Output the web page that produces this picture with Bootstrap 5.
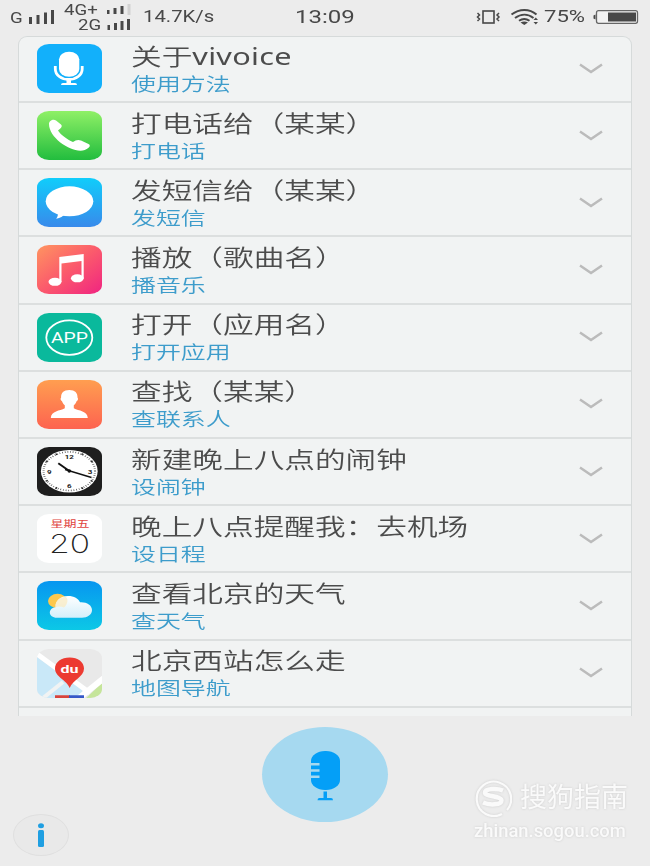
<!DOCTYPE html>
<html lang="zh-CN">
<head>
    <meta charset="UTF-8">
    <meta name="viewport" content="width=device-width, initial-scale=1.0">
    <title>vivoice</title>
    <link href="https://cdn.jsdelivr.net/npm/bootstrap@5.3.0/dist/css/bootstrap.min.css" rel="stylesheet">
    <style>
        body {
            background: #ececec;
            font-family: Roboto, "Noto Sans CJK SC", sans-serif;
            color: #505050;
            height: 866px;
            overflow: hidden;
        }
        svg { display: block; flex: none; }
        /* all lettering is wide: stretched sideways from its left edge */
        .wide {
            display: inline-block;
            white-space: nowrap;
            transform: scaleX(1.333);
            transform-origin: 0 50%;
        }
        .status { height: 34px; line-height: 1; color: #484848; margin-bottom: 2px; }
        .st-g { width: 18px; font-size: 14px; padding-top: 2px; }
        .st-net { width: 41px; font-size: 14px; }
        .st-speed { width: 152px; font-size: 16px; }
        .st-speed .wide { transform: scaleX(1.27); }
        .st-time { width: 181px; font-size: 18px; }
        .st-bat { width: 48px; font-size: 16.6px; }

        .cmd-list {
            height: 680px;
            margin: 0 18px;
            background: #f1f3f3;
            border: 1px solid #d6dada;
            border-bottom: 0;
            border-radius: 9px 9px 0 0;
            overflow: hidden;
        }
        .cmd-item {
            height: 67.2px;
            padding: 0 26px 0 18px;
            border-bottom: 2px solid #dcdfdf;
        }
        .cmd-item:first-child { height: 66px; padding-bottom: 1px; }
        .cmd-icon { width: 65px; height: 49px; margin-right: 28.500px; }
        .cmd-title { font-family: "Open Sans", "Noto Sans CJK SC", sans-serif; font-size: 23px; line-height: 28px; height: 28px; font-weight: 350; color: #4c4c4c; padding-top: 1px; }
        .cmd-title .latin { font-family: "Noto Sans", sans-serif; font-weight: 400; letter-spacing: .2px; }
        .cmd-sub { font-size: 18.7px; line-height: 28px; height: 28px; font-weight: 350; color: #3d9ccb; padding-top: 2px; }

        .footer-bar { height: 150px; }
        .btn-info-round {
            width: 56px; height: 42px;
            margin: 98px 0 0 13px;
            border: 1px solid #dfdfdf;
            border-radius: 50%;
            background: #e9e9e9;
        }
        .btn-mic {
            width: 126px; height: 95px;
            margin: 10.500px 0 0 193px;
            border-radius: 50%;
            background: #a6d9f0;
        }
        .logo-mark { margin: 63px 0 0 86px; color: #fafafa; filter: drop-shadow(0 0 1px #ccc); line-height: 1; }
        .logo-name { font-size: 27px; font-weight: 400; }
        .logo-url { font-size: 18.4px; font-weight: 500; font-family: Roboto, sans-serif; margin-top: 5px; }
    </style>
</head>
<body>
    <!-- status bar -->
    <div class="status d-flex align-items-center">
        <div class="st-g" style="margin-left: 10px"><span class="wide">G</span></div>
        <svg width="26" height="14" fill="#484848"><path d="M1 7h3v7H1zM8.500 5h3v9h-3zM16 2.500h3V14h-3zM23 0h3v14h-3z"/></svg>
        <div class="st-net" style="margin-left: 10px">
            <div><span class="wide">4G+</span></div>
            <div style="padding-left: 14px; margin-top: 1px"><span class="wide">2G</span></div>
        </div>
        <svg width="27" height="28" viewBox="0 0 27 28" fill="#484848">
            <path d="M2 7h2.500v4H2zM8.500 5h3v6h-3zM15.500 3h3v8h-3z"/><path fill="#d2d2d2" d="M22.500 1h3v11h-3z"/>
            <path d="M2.500 22H5v5H2.500zM9 20h3v7H9zM15.500 18h3v9h-3zM22 16h3v11h-3z"/>
        </svg>
        <div class="st-speed" style="margin-left: 11px"><span class="wide">14.7K/s</span></div>
        <div class="st-time"><span class="wide">13:09</span></div>
        <svg width="64" height="18" viewBox="0 0 64 18" fill="none" stroke="#484848">
            <rect x="7" y="3" width="11" height="12" stroke-width="1.600"/>
            <path d="M1.500 5l2 2-2 2 2 2-2 2M23 5l-2 2 2 2-2 2 2 2" stroke-width="1.500"/>
            <path d="M35.500 6.500c8-6 18-6 25 0M39 10c6-4.500 13-4.500 18.500 0M43 12.800c3.500-2.500 7-2.500 10.500 0" stroke-width="2"/>
            <path d="M44.500 14.500c2.500-1.300 5-1.300 7.500 0L48.300 17zM57.500 12l2.300-2.500L62 12zM57.500 14l2.300 2.500L62 14z" fill="#484848" stroke="none"/>
        </svg>
        <div class="st-bat" style="margin-left: 4px"><span class="wide">75%</span></div>
        <svg width="47" height="14" viewBox="0 0 47 14">
            <path d="M3.500 4.500v5l-2-1v-3z" fill="#484848"/>
            <rect x="4.500" y=".7" width="41" height="12.600" rx="2" fill="#f2f2f2" stroke="#666" stroke-width="1.300"/>
            <path d="M16 2.500h28v9H16z" fill="#484848"/>
        </svg>
    </div>

    <div class="cmd-list">
        <div class="cmd-item d-flex align-items-center">
            <svg class="cmd-icon" viewBox="0 0 65 49">
                <rect width="65" height="49" rx="12" ry="9" fill="#12b0fb"/>
                <rect x="22" y="7.700" width="20.300" height="25" rx="10" ry="7.600" fill="#fff"/>
                <path d="M18.300 22v3c0 6 6 10.500 13.400 10.500S45.200 31 45.200 25v-3" fill="none" stroke="#fff" stroke-width="2.800"/>
                <path d="M29.500 35h4.500v4H38q2 0 2 2H24q0-2 2-2h3.500z" fill="#fff"/>
            </svg>
            <div class="flex-grow-1">
                <div class="cmd-title"><span class="wide">关于<span class="latin">vivoice</span></span></div>
                <div class="cmd-sub"><span class="wide">使用方法</span></div>
            </div>
            <svg width="28" height="14"><path d="M3 2.500l11 7.500 11-7.500" fill="none" stroke="#bbb" stroke-width="2.500"/></svg>
        </div>
        <div class="cmd-item d-flex align-items-center">
            <svg class="cmd-icon" viewBox="0 0 65 49">
                <linearGradient id="gPhone" x2="0" y2="1"><stop stop-color="#8ff066"/><stop offset="1" stop-color="#22bd3e"/></linearGradient>
                <rect width="65" height="49" rx="12" ry="9" fill="url(#gPhone)"/>
                <path d="M12 13c0-3.500 4.500-5.500 7-3.500l5 4c2 2-.5 4-3 6 2.500 4 9 9 15 11.500 2.500-1.700 5-2.700 8-1.500l7.500 3.500c4 2-2 6.700-8 6.700C31 39.500 12 26 12 13z" fill="#fff"/>
            </svg>
            <div class="flex-grow-1">
                <div class="cmd-title"><span class="wide">打电话给（某某）</span></div>
                <div class="cmd-sub"><span class="wide">打电话</span></div>
            </div>
            <svg width="28" height="14"><path d="M3 2.500l11 7.500 11-7.500" fill="none" stroke="#bbb" stroke-width="2.500"/></svg>
        </div>
        <div class="cmd-item d-flex align-items-center">
            <svg class="cmd-icon" viewBox="0 0 65 49">
                <linearGradient id="gSms" x2="0" y2="1"><stop stop-color="#10cdfb"/><stop offset="1" stop-color="#388aeb"/></linearGradient>
                <rect width="65" height="49" rx="12" ry="9" fill="url(#gSms)"/>
                <ellipse cx="32.500" cy="23.300" rx="23.800" ry="15" fill="#fff"/>
                <path d="M20 33c1.500 3 1 5.500-.8 7.700 4-.7 7-2.500 9-4.700z" fill="#fff"/>
            </svg>
            <div class="flex-grow-1">
                <div class="cmd-title"><span class="wide">发短信给（某某）</span></div>
                <div class="cmd-sub"><span class="wide">发短信</span></div>
            </div>
            <svg width="28" height="14"><path d="M3 2.500l11 7.500 11-7.500" fill="none" stroke="#bbb" stroke-width="2.500"/></svg>
        </div>
        <div class="cmd-item d-flex align-items-center">
            <svg class="cmd-icon" viewBox="0 0 65 49">
                <linearGradient id="gMusic" x2="1" y2="1"><stop stop-color="#ff9560"/><stop offset=".5" stop-color="#fb5a6c"/><stop offset="1" stop-color="#f02481"/></linearGradient>
                <rect width="65" height="49" rx="12" ry="9" fill="url(#gMusic)"/>
                <path d="M22.300 12L46.700 9v24.300h-2.200V16l-20 2.500V37h-2.200z" fill="#fff"/>
                <ellipse cx="18" cy="36.800" rx="6.500" ry="4" fill="#fff"/>
                <ellipse cx="40.300" cy="33.300" rx="6.400" ry="4" fill="#fff"/>
            </svg>
            <div class="flex-grow-1">
                <div class="cmd-title"><span class="wide">播放（歌曲名）</span></div>
                <div class="cmd-sub"><span class="wide">播音乐</span></div>
            </div>
            <svg width="28" height="14"><path d="M3 2.500l11 7.500 11-7.500" fill="none" stroke="#bbb" stroke-width="2.500"/></svg>
        </div>
        <div class="cmd-item d-flex align-items-center">
            <svg class="cmd-icon" viewBox="0 0 65 49">
                <rect width="65" height="49" rx="12" ry="9" fill="#0ab99c"/>
                <ellipse cx="32.300" cy="24.600" rx="23" ry="17.200" fill="none" stroke="#fff" stroke-width="1.800"/>
                <text x="14" y="30" font-size="14" textLength="37" lengthAdjust="spacingAndGlyphs" fill="#fff">APP</text>
            </svg>
            <div class="flex-grow-1">
                <div class="cmd-title"><span class="wide">打开（应用名）</span></div>
                <div class="cmd-sub"><span class="wide">打开应用</span></div>
            </div>
            <svg width="28" height="14"><path d="M3 2.500l11 7.500 11-7.500" fill="none" stroke="#bbb" stroke-width="2.500"/></svg>
        </div>
        <div class="cmd-item d-flex align-items-center">
            <svg class="cmd-icon" viewBox="0 0 65 49">
                <linearGradient id="gUser" x2="0" y2="1"><stop stop-color="#ff9e50"/><stop offset="1" stop-color="#fd6350"/></linearGradient>
                <rect width="65" height="49" rx="12" ry="9" fill="url(#gUser)"/>
                <path d="M32.300 10c5.700 0 8.500 3 8.200 7.500 1 1 .5 3-.8 3.500-.6 2-1.700 3.300-2.900 4.300v3c5 2.700 13.500 2.500 14 9.700H13.800c.5-7.200 9-7 14-9.700v-3c-1.200-1-2.300-2.300-2.900-4.300-1.300-.5-1.800-2.500-.8-3.500-.3-4.500 2.500-7.500 8.200-7.500z" fill="#fff"/>
            </svg>
            <div class="flex-grow-1">
                <div class="cmd-title"><span class="wide">查找（某某）</span></div>
                <div class="cmd-sub"><span class="wide">查联系人</span></div>
            </div>
            <svg width="28" height="14"><path d="M3 2.500l11 7.500 11-7.500" fill="none" stroke="#bbb" stroke-width="2.500"/></svg>
        </div>
        <div class="cmd-item d-flex align-items-center">
            <svg class="cmd-icon" viewBox="0 0 65 49">
                <rect width="65" height="49" rx="12" ry="9" fill="#1e1e1e"/>
                <g transform="translate(32.300 24.200) scale(1.333 1)">
                    <circle r="21.300" fill="#fff"/>
                    <circle r="19.300" fill="none" stroke="#555" stroke-width="1.600" stroke-dasharray=".6 1.421"/>
                    <path d="M9.300-16.100l.9-1.600M16.100-9.300l1.600-.9M16.100 9.300l1.600.9M9.300 16.100l.9 1.600M-9.300-16.100l-.9-1.600M-16.100-9.300l-1.600-.9M-16.100 9.300l-1.600.9M-9.300 16.100l-.9 1.600" stroke="#222" stroke-width="1"/>
                    <g font-size="6" font-weight="700" fill="#222" text-anchor="middle">
                        <text y="-12">12</text><text x="15.500" y="2.500">3</text><text y="17">6</text><text x="-15" y="2.500">9</text>
                    </g>
                </g>
                <path d="M21.300 16.300L32.300 24" stroke="#111" stroke-width="2"/>
                <path d="M28 22.500l26.500 8" stroke="#111" stroke-width="1.400"/>
                <circle cx="32.300" cy="24" r="1.800" fill="#111"/>
            </svg>
            <div class="flex-grow-1">
                <div class="cmd-title"><span class="wide">新建晚上八点的闹钟</span></div>
                <div class="cmd-sub"><span class="wide">设闹钟</span></div>
            </div>
            <svg width="28" height="14"><path d="M3 2.500l11 7.500 11-7.500" fill="none" stroke="#bbb" stroke-width="2.500"/></svg>
        </div>
        <div class="cmd-item d-flex align-items-center">
            <svg class="cmd-icon" viewBox="0 0 65 49">
                <rect width="65" height="49" rx="12" ry="9" fill="#fff"/>
                <text x="13.500" y="12.800" font-size="9.500" textLength="39" lengthAdjust="spacingAndGlyphs" fill="#e0453f">星期五</text>
                <text x="12" y="39" font-family="Inter, sans-serif" font-size="26.500" font-weight="200" textLength="41" lengthAdjust="spacingAndGlyphs" fill="#222">20</text>
            </svg>
            <div class="flex-grow-1">
                <div class="cmd-title"><span class="wide">晚上八点提醒我：去机场</span></div>
                <div class="cmd-sub"><span class="wide">设日程</span></div>
            </div>
            <svg width="28" height="14"><path d="M3 2.500l11 7.500 11-7.500" fill="none" stroke="#bbb" stroke-width="2.500"/></svg>
        </div>
        <div class="cmd-item d-flex align-items-center">
            <svg class="cmd-icon" viewBox="0 0 65 49">
                <linearGradient id="gSky" x2="0" y2="1"><stop stop-color="#0796f0"/><stop offset="1" stop-color="#0cc8e6"/></linearGradient>
                <linearGradient id="gCloud" x2="0" y2="1"><stop stop-color="#fff"/><stop offset="1" stop-color="#d3effa"/></linearGradient>
                <rect width="65" height="49" rx="12" ry="9" fill="url(#gSky)"/>
                <ellipse cx="20.500" cy="20" rx="9.500" ry="7.200" fill="#fcc84d"/>
                <path d="M20 36.700c-9 0-9.500-9.500-1.500-10.500C18 19.500 24 15 31 15c6 0 10.500 2.500 12 6.300 6.500-.5 12 3 12 7.700s-4.500 7.700-10 7.700z" fill="url(#gCloud)"/>
                <path d="M18.500 26.200C18 19.500 24 15.500 29 16c3 3 1 8-2 10.500-3-1.500-6-1.300-8.500-.3z" fill="#fbe9bd" opacity=".7"/>
            </svg>
            <div class="flex-grow-1">
                <div class="cmd-title"><span class="wide">查看北京的天气</span></div>
                <div class="cmd-sub"><span class="wide">查天气</span></div>
            </div>
            <svg width="28" height="14"><path d="M3 2.500l11 7.500 11-7.500" fill="none" stroke="#bbb" stroke-width="2.500"/></svg>
        </div>
        <div class="cmd-item d-flex align-items-center">
            <svg class="cmd-icon" viewBox="0 0 65 49">
                <clipPath id="mapClip"><rect width="65" height="49" rx="12" ry="9"/></clipPath>
                <g clip-path="url(#mapClip)">
                    <path d="M0 0h65v49H0z" fill="#e9e9e9"/>
                    <path d="M0 8l45 33v8H0z" fill="#c9e8f8"/>
                    <path d="M0 5l53 39" stroke="#fff" stroke-width="5"/>
                    <path d="M6 49l20-16" stroke="#f1f3f3" stroke-width="4"/>
                    <path d="M46 52l21-20v20z" fill="#c5e59a"/>
                    <path d="M42 49l25-20" stroke="#fff" stroke-width="6"/>
                    <path d="M18 46.300h15V49H18z" fill="#d8443c"/><path d="M32 46.300h15V49H32z" fill="#3558c8"/>
                </g>
                <path d="M32.700 39C30 31 18 28 18 19.500 18 13 24.500 8.500 32.700 8.500S47 13 47 19.500C47 28 35.500 31 32.700 39z" fill="#ec3a31"/>
                <text x="23.500" y="23.500" font-size="11" font-weight="700" textLength="18" lengthAdjust="spacingAndGlyphs" fill="#fff">du</text>
            </svg>
            <div class="flex-grow-1">
                <div class="cmd-title"><span class="wide">北京西站怎么走</span></div>
                <div class="cmd-sub"><span class="wide">地图导航</span></div>
            </div>
            <svg width="28" height="14"><path d="M3 2.500l11 7.500 11-7.500" fill="none" stroke="#bbb" stroke-width="2.500"/></svg>
        </div>
    </div>

    <div class="footer-bar d-flex align-items-start">
        <button class="btn-info-round d-flex align-items-center justify-content-center p-0">
            <svg width="8" height="24" fill="#1f9fe2"><ellipse cx="4" cy="2.800" rx="3" ry="2.500"/><rect x="1" y="7" width="6" height="17" rx="1.500"/></svg>
        </button>
        <button class="btn-mic border-0 p-0 d-flex align-items-center justify-content-center">
            <svg width="32" height="51" viewBox="0 0 32 51" fill="#049ff7" class="mt-1">
                <rect x="2" y="0" width="29" height="39" rx="14" ry="10"/>
                <path d="M0 12h10.500v2.500H0zM0 18.200h10.500v2.500H0zM0 24.500h10.500V27H0z" fill="#a6d9f0"/>
                <path d="M14.500 40.500h3.500V47h4q2 0 2 2.300H8.500Q8.500 47 10.500 47h4z"/>
            </svg>
        </button>
        <div class="logo-mark">
            <div class="d-flex align-items-center">
                <svg width="38" height="38" viewBox="0 0 38 38" fill="none" stroke="#fafafa">
                    <path d="M33 31a17.200 17.200 0 1 0-5 4" stroke-width="2.200"/>
                    <path d="M29 11.500c-6-2.500-18-2-18 2 0 4.500 16.500 3 16.500 8 0 4.500-12 5-18.500 2" stroke-width="4.500"/>
                </svg>
                <span class="logo-name ms-2">搜狗指南</span>
            </div>
            <div class="logo-url">zhinan.sogou.com</div>
        </div>
    </div>

    <script src="https://cdn.jsdelivr.net/npm/bootstrap@5.3.0/dist/js/bootstrap.bundle.min.js"></script>
</body>
</html>
